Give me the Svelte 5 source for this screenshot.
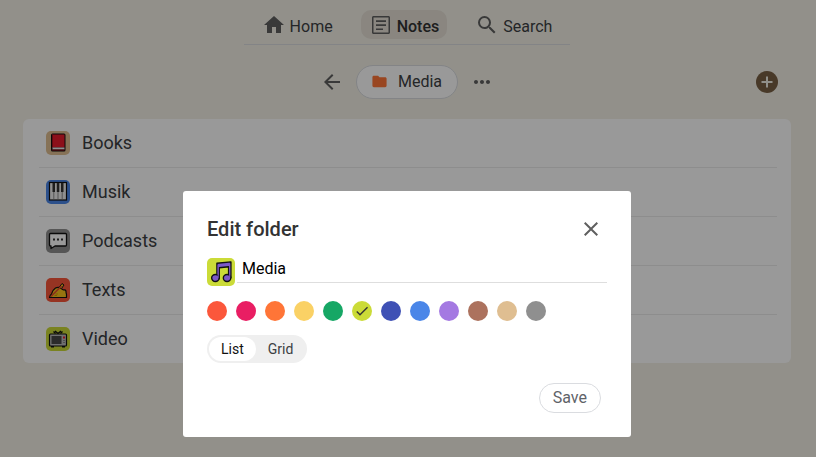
<script>
  const notes = [
    { name: 'Books', icon: 'book', color: '#dfbe91' },
    { name: 'Musik', icon: 'piano', color: '#4a86e8' },
    { name: 'Podcasts', icon: 'speech', color: '#8f8f8f' },
    { name: 'Texts', icon: 'writing', color: '#fb573b' },
    { name: 'Video', icon: 'tv', color: '#cbdb38' }
  ];

  const colors = [
    { name: 'red', value: '#fb573b' },
    { name: 'pink', value: '#e91e63' },
    { name: 'orange', value: '#ff7537' },
    { name: 'yellow', value: '#fad165' },
    { name: 'green', value: '#16a765' },
    { name: 'lime', value: '#cbdb38' },
    { name: 'indigo', value: '#3f51b5' },
    { name: 'blue', value: '#4a86e8' },
    { name: 'purple', value: '#a479e2' },
    { name: 'brown', value: '#ac725e' },
    { name: 'sand', value: '#dfbe91' },
    { name: 'gray', value: '#8f8f8f' }
  ];

  let open = $state(true);
  let folder = $state('Media');
  let color = $state('#cbdb38');
  let view = $state('List');

  function save(event) {
    event.preventDefault();
    open = false;
  }
</script>

{#snippet emoji(icon)}
  <svg viewBox="0 0 24 24" aria-hidden="true">
    {#if icon === 'book'}
      <rect x="5" y="2.500" width="14.500" height="18" rx="1.500" fill="#111" />
      <path d="M6 3.500h12.500v13H6z" fill="#ea1b2c" />
      <path d="M6 3.500h1v13H6z" fill="#a8101c" />
      <path d="M6.500 16.500h12v2h-12z" fill="#eee" />
      <path d="M6 18.500h12.500v1H6z" fill="#a8101c" />
    {:else if icon === 'piano'}
      <rect x="3.500" y="2.500" width="17" height="17.500" fill="#eee" stroke="#111" stroke-width="1.200" />
      <path d="M7.800 12v7.500M12 12v7.500M16.200 12v7.500" stroke="#777" stroke-width=".8" />
      <path d="M6.500 3H9v9H6.500zM10.800 3h2.500v9h-2.500zM15 3h2.500v9H15z" fill="#333" />
    {:else if icon === 'speech'}
      <path d="M4.500 4.500h15q1 0 1 1v10.500q0 1-1 1H9L5 19.500V17h-.5q-1 0-1-1V5.500q0-1 1-1z" fill="#fff" stroke="#111" stroke-width="1.300" stroke-linejoin="round" />
      <path d="M7 9.500h2v2H7zM11 9.500h2v2h-2zM15 9.500h2v2h-2z" fill="#333" />
    {:else if icon === 'writing'}
      <path d="M3.500 19.500q.5-2.500 2-3.500 1-4 4-6 2-1 4-.5l4 2.500q2.500-.5 2.500 1.500t.5 2.500v3.500z" fill="#fcc21b" stroke="#111" stroke-width="1.200" stroke-linejoin="round" />
      <path d="M13 9.500L16 5.500l2 1.500-2.500 3.500" fill="#fcc21b" stroke="#111" stroke-linejoin="round" />
      <path d="M5 18.500L15.500 8" stroke="#e8462f" stroke-width="1.400" />
      <path d="M9.500 16h2.500M8.500 17.500H11" stroke="#b87800" stroke-width=".6" />
    {:else if icon === 'tv'}
      <path d="M12 6.500L9 4M12 6.500L15 4M7.500 4.500l2 2M16.500 4.500l-2 2" stroke="#111" stroke-width="1.300" />
      <path d="M5 18h3v2.500H5zM16 18h3v2.500h-3z" fill="#111" />
      <rect x="3.500" y="7" width="17" height="12" rx="1" fill="#bbb" stroke="#111" stroke-width="1.200" />
      <rect x="5.500" y="9" width="10" height="8" fill="#484848" />
      <path d="M17 9.500h2v2h-2z" fill="#ea1b2c" />
      <path d="M17 13.500h2M17 15.500h2" stroke="#777" stroke-width=".8" />
    {:else if icon === 'music'}
      <path d="M8.500 17.500V4.500l12-1.200V17h-2V7.500l-8 .8v9.500z" fill="#7b58c9" stroke="#111" stroke-width="1.200" stroke-linejoin="round" />
      <ellipse cx="7.200" cy="17.200" rx="3.200" ry="3" fill="#7b58c9" stroke="#111" stroke-width="1.200" />
      <ellipse cx="17.200" cy="17.200" rx="3.200" ry="3" fill="#7b58c9" stroke="#111" stroke-width="1.200" />
      <path d="M9.100 17V6h.9v11zM19 17V5h.9v12z" fill="#7b58c9" />
    {/if}
  </svg>
{/snippet}

<div class="page">
  <nav>
    <a href="#home">
      <svg viewBox="0 0 24 24"><path d="M10 20v-6h4v6h5v-8h3L12 3 2 12h3v8z" /></svg>
      <span>Home</span>
    </a>
    <a href="#notes" class="active">
      <svg viewBox="0 0 24 24"><path d="M19.500 4.500v15h-15v-15h15m0-1.500h-15C3.700 3 3 3.700 3 4.500v15c0 .8.7 1.500 1.500 1.500h15c.8 0 1.500-.7 1.500-1.500v-15c0-.8-.7-1.500-1.500-1.500zM14 17H7v-1.500h7V17zm3-4H7v-1.700h10V13zm0-4H7V7.300h10V9z" /></svg>
      <span>Notes</span>
    </a>
    <a href="#search">
      <svg viewBox="0 0 24 24"><path d="M15.500 14h-.79l-.28-.27A6.471 6.471 0 0 0 16 9.500 6.500 6.500 0 1 0 9.500 16c1.610 0 3.090-.59 4.230-1.570l.27.28v.79l5 4.990L20.490 19l-4.990-5zm-6 0C7.010 14 5 11.990 5 9.500S7.010 5 9.500 5 14 7.010 14 9.500 11.990 14 9.500 14z" /></svg>
      <span>Search</span>
    </a>
  </nav>

  <header>
    <div class="crumbs">
      <button class="icon-btn" aria-label="Back">
        <svg viewBox="0 0 24 24"><path d="M20 11H7.830l5.590-5.590L12 4l-8 8 8 8 1.410-1.410L7.830 13H20v-2z" /></svg>
      </button>
      <button class="folder" onclick={() => (open = true)}>
        <svg viewBox="0 0 24 24"><path d="M10 4H4c-1.100 0-2 .9-2 2v12c0 1.100.9 2 2 2h16c1.100 0 2-.9 2-2V8c0-1.100-.9-2-2-2h-8l-2-2z" /></svg>
        Media
      </button>
      <button class="icon-btn" aria-label="More">
        <svg viewBox="0 0 24 24"><path d="M6 10c-1.100 0-2 .9-2 2s.9 2 2 2 2-.9 2-2-.9-2-2-2zm12 0c-1.100 0-2 .9-2 2s.9 2 2 2 2-.9 2-2-.9-2-2-2zm-6 0c-1.100 0-2 .9-2 2s.9 2 2 2 2-.9 2-2-.9-2-2-2z" /></svg>
      </button>
    </div>
    <button class="add" aria-label="Add">
      <svg viewBox="0 0 22 22"><path d="M11 5.500v11M5.500 11h11" stroke="#f1efe5" stroke-width="2" /></svg>
    </button>
  </header>

  <ul>
    {#each notes as note (note.name)}
      <li>
        <a href={'#' + note.name}>
          <span class="tile" style="background-color: {note.color}">{@render emoji(note.icon)}</span>
          <span class="title">{note.name}</span>
        </a>
      </li>
    {/each}
  </ul>
</div>

{#if open}
  <div class="overlay">
    <form class="dialog" role="dialog" aria-labelledby="dialog-title" onsubmit={save}>
      <div class="dialog-head">
        <h2 id="dialog-title">Edit folder</h2>
        <button type="button" class="close" aria-label="Close" onclick={() => (open = false)}>
          <svg viewBox="0 0 24 24"><path d="M19 6.410L17.590 5 12 10.590 6.410 5 5 6.410 10.590 12 5 17.590 6.410 19 12 13.410 17.590 19 19 17.590 13.410 12z" /></svg>
        </button>
      </div>

      <div class="name-row">
        <span class="tile large" style="background-color: {color}">{@render emoji('music')}</span>
        <input type="text" aria-label="Folder name" bind:value={folder} />
      </div>

      <div class="colors">
        {#each colors as c (c.value)}
          <label class="swatch" style="background-color: {c.value}">
            <input type="radio" name="color" aria-label={c.name} value={c.value} bind:group={color} />
            {#if color === c.value}
              <svg viewBox="0 0 24 24"><path d="M9 16.170L4.830 12l-1.420 1.410L9 19 21 7l-1.410-1.410z" /></svg>
            {/if}
          </label>
        {/each}
      </div>

      <div class="toggle">
        {#each ['List', 'Grid'] as option}
          <label class:selected={view === option}>
            <input type="radio" name="view" value={option} bind:group={view} />
            {option}
          </label>
        {/each}
      </div>

      <button class="save">Save</button>
    </form>
  </div>
{/if}

<style>
  :global(body) {
    background-color: #f3f1e7;
    font-family: Roboto, sans-serif;
    font-size: 16px;
    color: #3c4043;
  }

  button {
    padding: 0;
    border: none;
    background: none;
    font: inherit;
    color: inherit;
    cursor: pointer;
  }

  a {
    color: inherit;
    text-decoration: none;
  }

  svg {
    display: block;
    flex: none;
    fill: #5f5f5f;
  }

  .page {
    padding: 8px 25px 0 23px;
  }

  nav {
    display: flex;
    justify-content: center;
    gap: 14px;
    width: fit-content;
    margin: 0 auto;
    padding: 2px 4px 5px;
    border-bottom: 1px solid #dadce0;
  }

  nav a {
    display: flex;
    align-items: center;
    gap: 4px;
    height: 29px;
    padding: 0 8px;
    border-radius: 10px;
  }

  nav a:not(.active) {
    padding: 0 14px;
  }

  nav a.active {
    background-color: #e6e0d6;
    color: #333;
    font-weight: 500;
  }

  nav span {
    padding-top: 4px;
  }

  nav svg {
    width: 24px;
    height: 24px;
  }

  header {
    display: grid;
    grid-template-columns: 1fr auto 1fr;
    align-items: center;
    margin-top: 20px;
    padding-right: 13px;
  }

  .crumbs {
    grid-column: 2;
    display: flex;
    align-items: center;
    gap: 12px;
    padding-left: 13px;
  }

  .icon-btn svg {
    width: 24px;
    height: 24px;
  }

  .folder {
    display: flex;
    align-items: center;
    gap: 10px;
    height: 34px;
    box-sizing: border-box;
    padding: 0 15px 1px 14px;
    border: 1px solid #dadce0;
    border-radius: 17px;
    background-color: #fff;
  }

  .folder svg {
    width: 17px;
    height: 17px;
    fill: #ff7537;
  }

  .add {
    justify-self: end;
    width: 22px;
    height: 22px;
    border-radius: 50%;
    background-color: #795f43;
  }

  ul {
    margin: 20px 0 0;
    padding: 0 14px 0 16px;
    border-radius: 6px;
    background-color: #fff;
    list-style: none;
  }

  li:not(:last-child) {
    border-bottom: 1px solid #ebebeb;
  }

  li a {
    display: flex;
    align-items: center;
    gap: 12px;
    height: 48px;
    padding-left: 7px;
    font-size: 18px;
  }

  .title {
    padding-bottom: 2px;
  }

  .tile {
    flex: none;
    width: 24px;
    height: 24px;
    border-radius: 5px;
  }

  .tile.large {
    width: 28px;
    height: 28px;
  }

  .overlay {
    position: fixed;
    inset: 0;
    padding: 191px 18px 20px 16px;
    overflow: auto;
    background-color: rgb(0 0 0 / 40%);
  }

  .dialog {
    display: flex;
    flex-direction: column;
    box-sizing: border-box;
    max-width: 448px;
    margin: 0 auto;
    padding: 24px;
    border-radius: 3px;
    background-color: #fff;
  }

  .dialog-head {
    display: flex;
    align-items: center;
    justify-content: space-between;
    height: 28px;
    padding-right: 4px;
  }

  h2 {
    margin: 0;
    font-size: 20px;
    font-weight: 500;
    color: #333;
  }

  .close svg {
    width: 24px;
    height: 24px;
  }

  .name-row {
    display: flex;
    gap: 2px;
    margin-top: 15px;
  }

  .name-row input {
    flex: 1;
    min-width: 0;
    height: 25px;
    box-sizing: border-box;
    padding: 0 5px 3px;
    border: none;
    border-bottom: 1px solid #dedede;
    outline: none;
    font: inherit;
    color: #000;
  }

  .colors {
    display: flex;
    flex-wrap: wrap;
    gap: 9px;
    margin-top: 15px;
  }

  .swatch {
    width: 20px;
    height: 20px;
    border-radius: 50%;
    cursor: pointer;
  }

  .swatch svg {
    width: 16px;
    height: 16px;
    margin: 2px;
    fill: #333;
  }

  .swatch input,
  .toggle input {
    position: absolute;
    opacity: 0;
    margin: 0;
    width: 1px;
    height: 1px;
  }

  .toggle {
    display: flex;
    align-self: flex-start;
    margin-top: 14px;
    padding: 2px;
    border-radius: 14px;
    background-color: #efefef;
    font-size: 14px;
  }

  .toggle label {
    padding: 0 12px;
    border-radius: 12px;
    line-height: 24px;
    cursor: pointer;
  }

  .toggle .selected {
    background-color: #fff;
    color: #111;
  }

  .save {
    align-self: flex-end;
    height: 30px;
    margin: 20px 6px 0 0;
    padding: 0 13px 1px;
    border: 1px solid #dadce0;
    border-radius: 15px;
    color: #5f6368;
  }
</style>
